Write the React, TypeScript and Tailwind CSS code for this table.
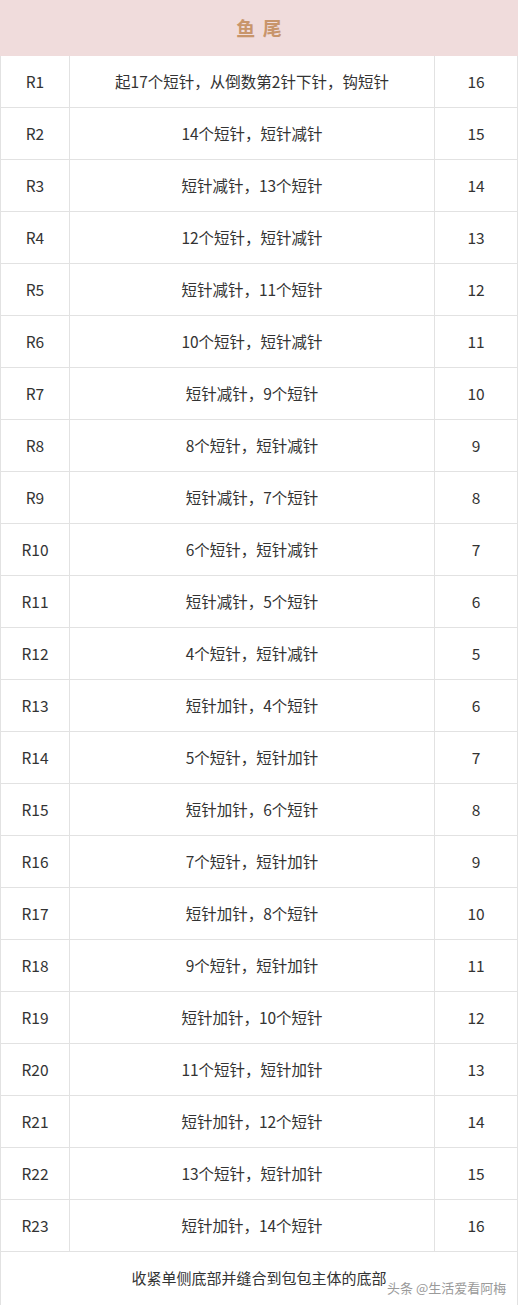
const rows: [string, string, number][] = [
  ['R1', '起17个短针，从倒数第2针下针，钩短针', 16],
  ['R2', '14个短针，短针减针', 15],
  ['R3', '短针减针，13个短针', 14],
  ['R4', '12个短针，短针减针', 13],
  ['R5', '短针减针，11个短针', 12],
  ['R6', '10个短针，短针减针', 11],
  ['R7', '短针减针，9个短针', 10],
  ['R8', '8个短针，短针减针', 9],
  ['R9', '短针减针，7个短针', 8],
  ['R10', '6个短针，短针减针', 7],
  ['R11', '短针减针，5个短针', 6],
  ['R12', '4个短针，短针减针', 5],
  ['R13', '短针加针，4个短针', 6],
  ['R14', '5个短针，短针加针', 7],
  ['R15', '短针加针，6个短针', 8],
  ['R16', '7个短针，短针加针', 9],
  ['R17', '短针加针，8个短针', 10],
  ['R18', '9个短针，短针加针', 11],
  ['R19', '短针加针，10个短针', 12],
  ['R20', '11个短针，短针加针', 13],
  ['R21', '短针加针，12个短针', 14],
  ['R22', '13个短针，短针加针', 15],
  ['R23', '短针加针，14个短针', 16],
];

export default function App() {
  return (
    <div
      className="w-[518px] h-[1305px] bg-white text-[#333] overflow-hidden"
      style={{ fontFamily: '"Noto Sans CJK SC", "Noto Sans", sans-serif' }}
    >
      {/* Title */}
      <div className="h-[56px] bg-[#f0dcdc] flex items-center justify-center">
        <span className="text-[19px] font-bold text-[#c8956b] tracking-[0.4em] pl-[0.4em]">鱼尾</span>
      </div>

      {/* Rows */}
      <div className="border-l border-r border-[#e2e2e2]">
        {rows.map(([r, text, n]) => (
          <div key={r} className="h-[52px] flex border-b border-[#e2e2e2] text-[15.5px]">
            <div className="w-[69px] flex items-center justify-center border-r border-[#e2e2e2]">{r}</div>
            <div className="flex-1 flex items-center justify-center border-r border-[#e2e2e2]">{text}</div>
            <div className="w-[82px] flex items-center justify-center">{n}</div>
          </div>
        ))}

        {/* Footer */}
        <div className="relative h-[53px] flex items-center justify-center text-[15px]">
          <span>收紧单侧底部并缝合到包包主体的底部</span>
          <span className="absolute left-[386px] top-[26px] text-[13px] text-[#9a9a9a] whitespace-nowrap">
            头条 @生活爱看阿梅
          </span>
        </div>
      </div>
    </div>
  );
}
